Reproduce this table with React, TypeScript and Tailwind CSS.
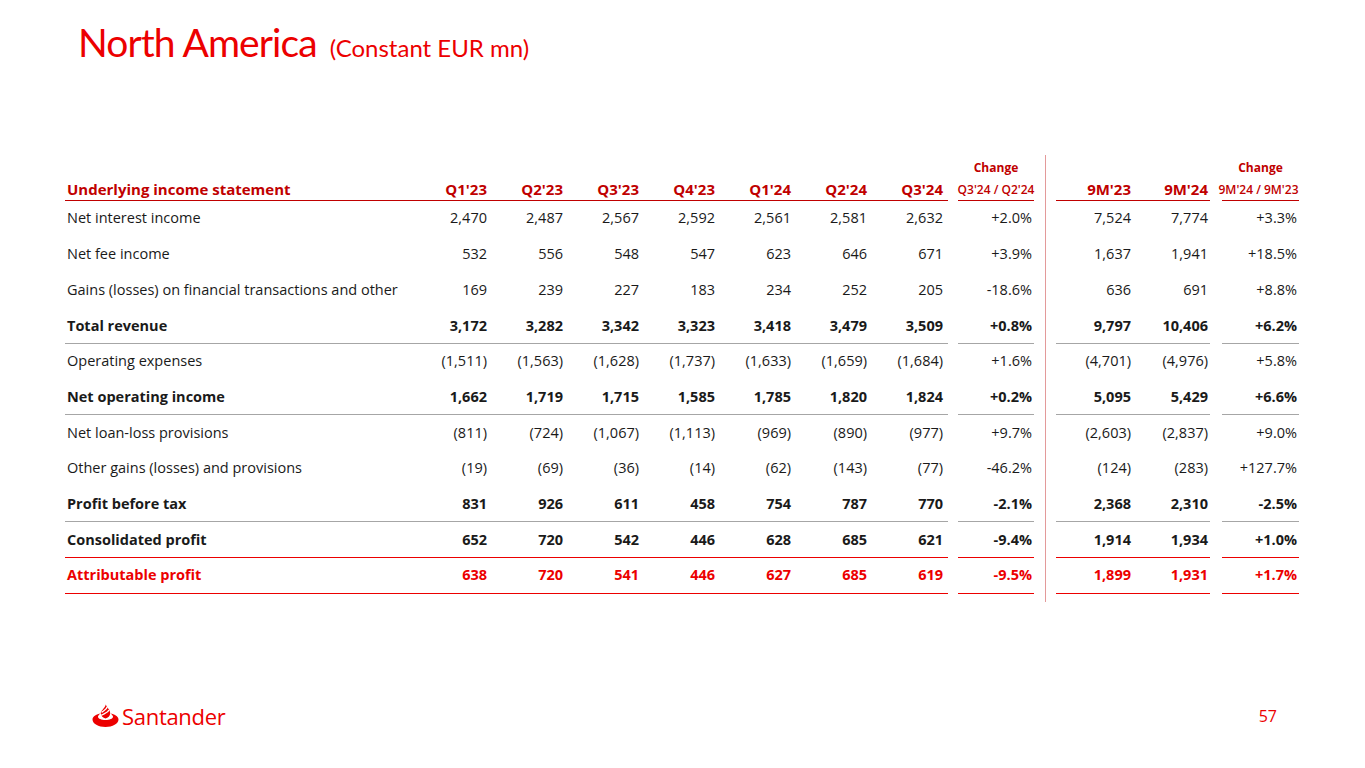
import React from 'react';

type Row = {
  label: string;
  q: string[];
  ch: string;
  m: string[];
  mch: string;
  bold?: boolean;
  red?: boolean;
  line?: 'gray' | 'red';
};

const rows: Row[] = [
  { label: 'Net interest income', q: ['2,470', '2,487', '2,567', '2,592', '2,561', '2,581', '2,632'], ch: '+2.0%', m: ['7,524', '7,774'], mch: '+3.3%' },
  { label: 'Net fee income', q: ['532', '556', '548', '547', '623', '646', '671'], ch: '+3.9%', m: ['1,637', '1,941'], mch: '+18.5%' },
  { label: 'Gains (losses) on financial transactions and other', q: ['169', '239', '227', '183', '234', '252', '205'], ch: '-18.6%', m: ['636', '691'], mch: '+8.8%' },
  { label: 'Total revenue', q: ['3,172', '3,282', '3,342', '3,323', '3,418', '3,479', '3,509'], ch: '+0.8%', m: ['9,797', '10,406'], mch: '+6.2%', bold: true, line: 'gray' },
  { label: 'Operating expenses', q: ['(1,511)', '(1,563)', '(1,628)', '(1,737)', '(1,633)', '(1,659)', '(1,684)'], ch: '+1.6%', m: ['(4,701)', '(4,976)'], mch: '+5.8%' },
  { label: 'Net operating income', q: ['1,662', '1,719', '1,715', '1,585', '1,785', '1,820', '1,824'], ch: '+0.2%', m: ['5,095', '5,429'], mch: '+6.6%', bold: true, line: 'gray' },
  { label: 'Net loan-loss provisions', q: ['(811)', '(724)', '(1,067)', '(1,113)', '(969)', '(890)', '(977)'], ch: '+9.7%', m: ['(2,603)', '(2,837)'], mch: '+9.0%' },
  { label: 'Other gains (losses) and provisions', q: ['(19)', '(69)', '(36)', '(14)', '(62)', '(143)', '(77)'], ch: '-46.2%', m: ['(124)', '(283)'], mch: '+127.7%' },
  { label: 'Profit before tax', q: ['831', '926', '611', '458', '754', '787', '770'], ch: '-2.1%', m: ['2,368', '2,310'], mch: '-2.5%', bold: true, line: 'gray' },
  { label: 'Consolidated profit', q: ['652', '720', '542', '446', '628', '685', '621'], ch: '-9.4%', m: ['1,914', '1,934'], mch: '+1.0%', bold: true, line: 'red' },
  { label: 'Attributable profit', q: ['638', '720', '541', '446', '627', '685', '619'], ch: '-9.5%', m: ['1,899', '1,931'], mch: '+1.7%', bold: true, red: true, line: 'red' },
];

const quarters = ["Q1'23", "Q2'23", "Q3'23", "Q4'23", "Q1'24", "Q2'24", "Q3'24"];

function lineClass(line?: 'gray' | 'red') {
  if (line === 'gray') return 'border-b border-[#a6a6a6]';
  if (line === 'red') return 'border-b border-[#ec0000]';
  return 'border-b border-transparent';
}

function Flame() {
  return (
    <svg width="27" height="24" viewBox="0 0 27 24">
      <path
        d="M0.5 15.5 C0.5 12 5 10 8.5 9.5 C7 10.6 6 11.7 6 12.8 C6 14.8 9.4 16 13.5 16 C17.6 16 21 14.8 21 12.8 C21 11.7 20 10.6 18.5 9.5 C22 10 26.5 12 26.5 15.5 C26.5 19.8 20.6 23 13.5 23 C6.4 23 0.5 19.8 0.5 15.5 Z"
        fill="#ec0000"
      />
      <path
        d="M13.8 0.5 C14.6 3.5 18.5 5.8 18.2 9.6 C18 12.2 16 14 13.5 14.6 C11 14 9 12.2 8.8 9.6 C8.6 6.5 12.8 4.5 13.8 0.5 Z"
        fill="#ec0000"
      />
      <path d="M9.6 8.4 C11.8 6.6 14.6 5.6 15.2 3" stroke="#fff" strokeWidth="1.4" fill="none" />
      <path d="M9.2 11.4 C11.8 9.6 16 8.8 17 6" stroke="#fff" strokeWidth="1.4" fill="none" />
    </svg>
  );
}

export default function App() {
  return (
    <div className="w-[1365px] h-[768px] bg-white flex flex-col overflow-hidden font-['Open_Sans',sans-serif] text-[#1a1a1a]">
      <div className="h-[155px] pl-[78px] pt-[23px]">
        <h1 className="text-[#ec0000] leading-none whitespace-nowrap">
          <span className="text-[39px] font-['Lato',sans-serif] tracking-[-0.9px]">North America</span>
          <span className="text-[24px] font-['Lato',sans-serif] ml-[13px]">(Constant EUR mn)</span>
        </h1>
      </div>

      <div className="flex pl-[65px] text-[14.5px]">
        {/* left block: label + quarters + change */}
        <div className="flex flex-col">
          <div className="flex h-[46px]">
            <div className="w-[883px] flex items-end border-b border-[#c00000] pb-[1px] font-bold text-[#c00000] text-[15px] leading-[20px]">
              <div className="w-[346px] pl-[2px]">Underlying income statement</div>
              {quarters.map((h) => (
                <div key={h} className="w-[76px] text-right">{h}</div>
              ))}
            </div>
            <div className="ml-[10px] w-[76px] flex flex-col justify-end items-center border-b border-[#c00000] pb-[2px] font-semibold text-[#c00000] text-[12px] leading-[16px]">
              <div className="mb-[6px] font-bold">Change</div>
              <div className="whitespace-nowrap">Q3'24 / Q2'24</div>
            </div>
          </div>
          {rows.map((r) => (
            <div key={r.label} className={`flex h-[35.7px] ${r.bold ? 'font-bold' : ''} ${r.red ? 'text-[#ec0000]' : ''}`}>
              <div className={`w-[883px] flex items-center ${lineClass(r.line)}`}>
                <div className="w-[346px] pl-[2px] whitespace-nowrap">{r.label}</div>
                {r.q.map((v, i) => (
                  <div key={i} className="w-[76px] text-right">{v}</div>
                ))}
              </div>
              <div className={`ml-[10px] w-[76px] flex items-center justify-end pr-[2px] ${lineClass(r.line)}`}>{r.ch}</div>
            </div>
          ))}
          <div className="h-[8px]" />
        </div>

        <div className="ml-[11px] w-px bg-[#e39a9a]" />

        {/* right block: 9M + change */}
        <div className="flex flex-col ml-[10px]">
          <div className="flex h-[46px]">
            <div className="w-[154px] flex items-end border-b border-[#c00000] pb-[1px] font-bold text-[#c00000] text-[15px] leading-[20px]">
              <div className="w-[75px] text-right">9M'23</div>
              <div className="w-[79px] text-right pr-[2px]">9M'24</div>
            </div>
            <div className="ml-[12px] w-[77px] flex flex-col justify-end items-center border-b border-[#c00000] pb-[2px] font-semibold text-[#c00000] text-[12px] leading-[16px]">
              <div className="mb-[6px] font-bold">Change</div>
              <div className="whitespace-nowrap -ml-[4px]">9M'24 / 9M'23</div>
            </div>
          </div>
          {rows.map((r) => (
            <div key={r.label} className={`flex h-[35.7px] ${r.bold ? 'font-bold' : ''} ${r.red ? 'text-[#ec0000]' : ''}`}>
              <div className={`w-[154px] flex items-center ${lineClass(r.line)}`}>
                <div className="w-[75px] text-right">{r.m[0]}</div>
                <div className="w-[79px] text-right pr-[2px]">{r.m[1]}</div>
              </div>
              <div className={`ml-[12px] w-[77px] flex items-center justify-end pr-[2px] ${lineClass(r.line)}`}>{r.mch}</div>
            </div>
          ))}
        </div>
      </div>

      <div className="mt-auto mb-[40px] flex items-end justify-between pl-[92px] pr-[88px]">
        <div className="flex items-center gap-[3px]">
          <Flame />
          <span className="text-[#ec0000] text-[22px] leading-none font-['Open_Sans',sans-serif] tracking-[-0.3px]">Santander</span>
        </div>
        <div className="text-[#ec0000] text-[16px] leading-none mb-[4px]">57</div>
      </div>
    </div>
  );
}
